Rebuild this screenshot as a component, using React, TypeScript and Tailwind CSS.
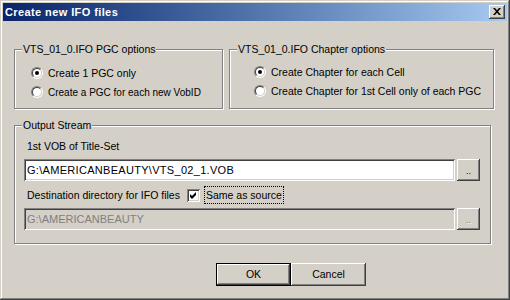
import React from "react";

const raised =
  "shadow-[inset_-1px_-1px_#404040,inset_1px_1px_#ffffff,inset_-2px_-2px_#808080,inset_2px_2px_#d4d0c8]";
const sunken =
  "shadow-[inset_1px_1px_#808080,inset_-1px_-1px_#ffffff,inset_2px_2px_#404040,inset_-2px_-2px_#d4d0c8]";

function Group({
  legend,
  className,
  children,
}: {
  legend: string;
  className: string;
  children: React.ReactNode;
}) {
  return (
    <div
      className={`relative border border-[#808080] shadow-[inset_1px_1px_#ffffff,1px_1px_#ffffff] ${className}`}
    >
      <span className="absolute -top-[7px] left-[7px] px-[1px] bg-[#d4d0c8] leading-[13px] whitespace-nowrap">
        {legend}
      </span>
      {children}
    </div>
  );
}

function Radio({
  checked,
  label,
  small,
}: {
  checked: boolean;
  label: string;
  small?: boolean;
}) {
  return (
    <div className="flex items-center h-[12px]">
      <span className="w-[12px] h-[12px] rounded-full border border-t-[#808080] border-l-[#808080] border-r-white border-b-white flex shrink-0">
        <span className="flex-1 rounded-full border border-t-[#404040] border-l-[#404040] border-r-[#d4d0c8] border-b-[#d4d0c8] bg-white flex items-center justify-center">
          {checked ? <span className="w-[4px] h-[4px] rounded-full bg-black" /> : null}
        </span>
      </span>
      <span
        className={`ml-[5px] leading-[13px] whitespace-nowrap ${small ? "text-[10px]" : ""}`}
      >
        {label}
      </span>
    </div>
  );
}

function SmallBtn({ disabled }: { disabled?: boolean }) {
  return (
    <div
      className={`w-[23px] h-[22px] bg-[#d4d0c8] ${raised} flex items-center justify-center`}
    >
      <span
        className={`text-[9px] leading-[9px] mt-[2px] ${
          disabled ? "text-[#808080] [text-shadow:1px_1px_#ffffff]" : "text-black"
        }`}
      >
        ..
      </span>
    </div>
  );
}

export default function App() {
  return (
    <div
      className={`w-[510px] h-[300px] bg-[#d4d0c8] overflow-hidden flex flex-col text-[10.5px] text-black font-['Liberation_Sans',Arial,sans-serif] shadow-[inset_-1px_-1px_#404040,inset_1px_1px_#d4d0c8,inset_-2px_-2px_#808080,inset_2px_2px_#ffffff]`}
    >
      {/* Title bar */}
      <div className="mx-[3px] mt-[3px] h-[18px] bg-linear-to-r from-[#0a246a] to-[#a6caf0] flex items-center justify-between">
        <span className="ml-[2px] text-white font-bold text-[11px] tracking-[0.4px] leading-[13px]">
          Create new IFO files
        </span>
        <div
          className={`mr-[2px] w-[16px] h-[14px] bg-[#d4d0c8] ${raised} flex items-center justify-center`}
        >
          <svg width="8" height="7" viewBox="0 0 8 7" className="mb-[1px]">
            <path d="M0 0h2l2 2.2L6 0h2L5 3.5 8 7H6L4 4.8 2 7H0l3-3.5z" fill="#000" />
          </svg>
        </div>
      </div>

      {/* Body */}
      <div className="flex flex-col pl-[14px] pt-[28px]">
        <div className="flex gap-[6px]">
          <Group legend="VTS_01_0.IFO PGC options" className="w-[209px] h-[60px]">
            <div className="flex flex-col gap-[7px] pt-[17px] pl-[16px]">
              <Radio checked label="Create 1 PGC only" />
              <Radio checked={false} small label="Create a PGC for each new VobID" />
            </div>
          </Group>
          <Group legend="VTS_01_0.IFO Chapter options" className="w-[265px] h-[60px]">
            <div className="flex flex-col gap-[7px] pt-[16px] pl-[24px]">
              <Radio checked label="Create Chapter for each Cell" />
              <Radio checked={false} label="Create Chapter for 1st Cell only of each PGC" />
            </div>
          </Group>
        </div>

        <Group legend="Output Stream" className="mt-[16px] w-[477px] h-[119px]">
          <div className="flex flex-col pl-[9px] pt-[14px]">
            <span className="ml-[3px] leading-[13px]">1st VOB of Title-Set</span>
            <div className="flex items-start gap-[2px] mt-[6px]">
              <div
                className={`w-[431px] h-[22px] bg-white ${sunken} flex items-center pl-[3px] leading-[13px] text-[11px] tracking-[0.3px]`}
              >
                G:\AMERICANBEAUTY\VTS_02_1.VOB
              </div>
              <SmallBtn />
            </div>
            <div className="flex items-center mt-[5px] h-[18px]">
              <span className="ml-[3px] w-[160px] leading-[13px] whitespace-nowrap">
                Destination directory for IFO files
              </span>
              <span
                className={`w-[13px] h-[13px] bg-white ${sunken} flex items-center justify-center shrink-0`}
              >
                <svg width="7" height="7" viewBox="0 0 7 7">
                  <polygon points="0,2 2,4 6,0 6,3 2,7 0,5" fill="#000" />
                </svg>
              </span>
              <span className="ml-[4px] border border-dotted border-black px-[1px] leading-[16px] whitespace-nowrap">
                Same as source
              </span>
            </div>
            <div className="flex items-start gap-[2px] mt-[4px]">
              <div
                className={`w-[431px] h-[22px] bg-[#d4d0c8] ${sunken} flex items-center pl-[3px] leading-[13px] text-[11px] text-[#808080]`}
              >
                G:\AMERICANBEAUTY
              </div>
              <SmallBtn disabled />
            </div>
          </div>
        </Group>

        <div className="flex ml-[202px] mt-[19px]">
          <div className="w-[75px] h-[23px] border border-black flex">
            <div className={`flex-1 bg-[#d4d0c8] ${raised} flex items-center justify-center leading-[13px]`}>
              OK
            </div>
          </div>
          <div
            className={`w-[75px] h-[23px] bg-[#d4d0c8] ${raised} flex items-center justify-center leading-[13px]`}
          >
            Cancel
          </div>
        </div>
      </div>
    </div>
  );
}
